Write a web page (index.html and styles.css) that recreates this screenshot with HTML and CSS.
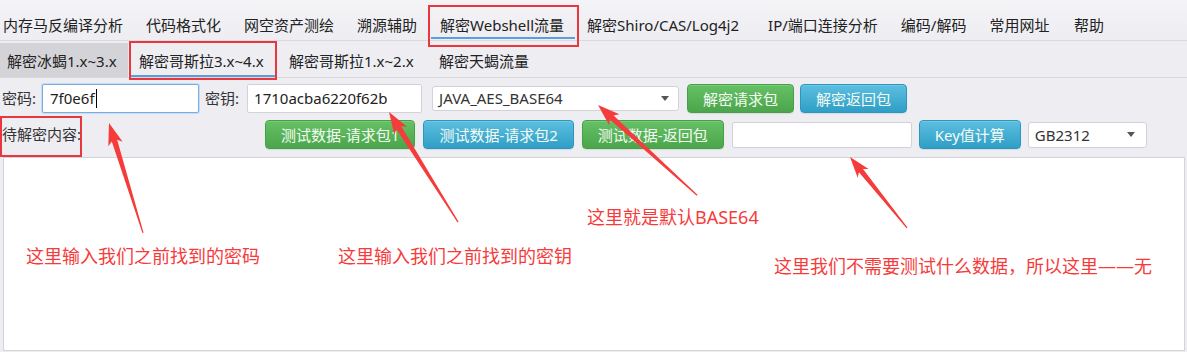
FILE: index.html
```html
<!DOCTYPE html>
<html lang="zh-CN">
<head>
<meta charset="utf-8">
<title>解密Webshell流量</title>
<link rel="stylesheet" href="styles.css">
</head>
<body>
<div class="app">
  <nav class="menubar">
    <div class="menu-item">内存马反编译分析</div>
    <div class="menu-item">代码格式化</div>
    <div class="menu-item">网空资产测绘</div>
    <div class="menu-item">溯源辅助</div>
    <div class="menu-item active">解密Webshell流量</div>
    <div class="menu-item menu-wide">解密Shiro/CAS/Log4j2</div>
    <div class="menu-item">IP/端口连接分析</div>
    <div class="menu-item">编码/解码</div>
    <div class="menu-item">常用网址</div>
    <div class="menu-item menu-last">帮助</div>
  </nav>
  <div class="tabbar">
    <div class="tab tab-first">解密冰蝎1.x~3.x</div>
    <div class="tab tab-fixed active">解密哥斯拉3.x~4.x</div>
    <div class="tab tab-fixed">解密哥斯拉1.x~2.x</div>
    <div class="tab">解密天蝎流量</div>
  </div>
  <div class="row row-1">
    <span class="lbl">密码:</span>
    <div class="field field-focus field-pwd"><span>7f0e6f</span><span class="caret"></span></div>
    <span class="lbl lbl-key">密钥:</span>
    <div class="field field-key">1710acba6220f62b</div>
    <div class="select select-mode"><span>JAVA_AES_BASE64</span><span class="select-arrow"></span></div>
    <div class="btn btn-green btn-dec-req">解密请求包</div>
    <div class="btn btn-blue btn-dec-resp">解密返回包</div>
  </div>
  <div class="row row-2">
    <div class="lbl-cell"><span class="lbl lbl-boxed">待解密内容:</span></div>
    <div class="btn btn-green">测试数据-请求包1</div>
    <div class="btn btn-blue btn-gap8">测试数据-请求包2</div>
    <div class="btn btn-green btn-gap8">测试数据-返回包</div>
    <div class="field field-test"></div>
    <div class="btn btn-blue btn-key">Key值计算</div>
    <div class="select select-enc"><span>GB2312</span><span class="select-arrow"></span></div>
  </div>
  <div class="editor"></div>

  <div class="note note-1">这里输入我们之前找到的密码</div>
  <div class="note note-2">这里输入我们之前找到的密钥</div>
  <div class="note note-3">这里就是默认BASE64</div>
  <div class="note note-4">这里我们不需要测试什么数据，所以这里——无</div>

  <svg class="arrows" width="1187" height="352" viewBox="0 0 1187 352">
    <g fill="#f63b3b">
      <polygon transform="translate(109 123) rotate(72.8)" points="0,0 22,-7.5 18.5,-2.8 115,-0.6 115,0.6 18.5,2.8 22,7.5"/>
      <polygon transform="translate(389 112) rotate(57.9)" points="0,0 22,-7.5 18.5,-2.8 130,-0.6 130,0.6 18.5,2.8 22,7.5"/>
      <polygon transform="translate(598 105) rotate(42.3)" points="0,0 22,-7.5 18.5,-2.8 134,-0.6 134,0.6 18.5,2.8 22,7.5"/>
      <polygon transform="translate(850 157) rotate(51.2)" points="0,0 21,-7 17.5,-2.6 91,-0.6 91,0.6 17.5,2.6 21,7"/>
    </g>
  </svg>
</div>
</body>
</html>
```
FILE: styles.css
```css
html, body {
  margin: 0;
  padding: 0;
}

body {
  background: #ededf2;
  font-family: "Noto Sans", "Noto Sans CJK SC", sans-serif;
  font-size: 15px;
  color: #222;
}

.app {
  position: relative;
  width: 1187px;
  height: 352px;
  overflow: hidden;
}

/* ---------- menu bar ---------- */
.menubar {
  display: flex;
  height: 40px;
  border-bottom: 1px solid #dadade;
  background: linear-gradient(#f4f4f7, #ededf2);
}

.menu-item {
  position: relative;
  padding: 10px 11.5px 0;
  line-height: 30px;
  white-space: nowrap;
}

.menu-item:first-child {
  padding-left: 3px;
}

.menu-wide {
  padding-right: 17.5px;
}

.menu-last {
  padding-left: 13px;
}

.menu-item.active::before {
  content: "";
  position: absolute;
  left: 2.5px;
  right: 0.5px;
  bottom: 1px;
  height: 2px;
  background: #5b9de0;
}

.menu-item.active::after {
  content: "";
  position: absolute;
  left: -0.5px;
  right: -3.5px;
  top: 5px;
  bottom: -7px;
  border: 2px solid #e8383d;
  z-index: 2;
}

/* ---------- tab bar ---------- */
.tabbar {
  display: flex;
  align-items: flex-end;
  height: 36px;
  border-bottom: 1px solid #d8d8dc;
}

.tab {
  position: relative;
  box-sizing: border-box;
  height: 34px;
  padding: 2px 11px 0;
  line-height: 32px;
  white-space: nowrap;
  flex: none;
}

.tab-first {
  width: 128px;
  padding-left: 7px;
  background: #d4d4d8;
}

.tab-fixed {
  width: 150px;
}

.tab.active::before {
  content: "";
  position: absolute;
  left: 3px;
  right: 2px;
  bottom: 0;
  height: 2px;
  background: #5b9de0;
}

.tab.active::after {
  content: "";
  position: absolute;
  left: 1px;
  right: 1px;
  top: -2px;
  bottom: -3px;
  border: 2px solid #e8383d;
  z-index: 2;
}

/* ---------- form rows ---------- */
.row {
  display: flex;
  align-items: center;
  padding-left: 2px;
}

.row-1 {
  margin-top: 5px;
  height: 30px;
}

.row-2 {
  margin-top: 7px;
  height: 29px;
}

.lbl {
  color: #333;
  white-space: nowrap;
  line-height: 29px;
}

.lbl-key {
  margin-left: 6px;
}

.lbl-cell {
  width: 263px;
  flex: none;
}

.lbl-boxed {
  position: relative;
  display: inline-block;
}

.lbl-boxed::after {
  content: "";
  position: absolute;
  left: -2px;
  right: -1px;
  top: -4px;
  bottom: -8px;
  border: 2px solid #e8383d;
}

.field {
  box-sizing: border-box;
  height: 29px;
  display: flex;
  align-items: center;
  padding: 0 6px;
  background: #fff;
  border: 1px solid #d2d2d8;
  border-radius: 2px;
  color: #222;
  white-space: nowrap;
  flex: none;
}

.field-focus {
  border-color: #7aaee2;
  box-shadow: 0 0 0 1px #c4dcf4;
}

.field-pwd {
  margin-left: 6px;
  width: 157px;
  padding-left: 7px;
}

.field-key {
  margin-left: 8px;
  width: 175px;
}

.field-test {
  margin-left: 8px;
  width: 180px;
  height: 26px;
}

.caret {
  width: 1px;
  height: 19px;
  background: #000;
  margin-left: 1px;
}

.select {
  box-sizing: border-box;
  display: flex;
  align-items: center;
  justify-content: space-between;
  padding: 0 9px 0 6px;
  background: #fff;
  border: 1px solid #d2d2d8;
  border-radius: 3px;
  color: #333;
  white-space: nowrap;
  flex: none;
}

.select-mode {
  margin-left: 10px;
  width: 247px;
  height: 25px;
}

.select-enc {
  margin-left: 7px;
  width: 119px;
  height: 26px;
  padding-right: 11px;
}

.select-arrow {
  width: 0;
  height: 0;
  border-left: 4px solid transparent;
  border-right: 4px solid transparent;
  border-top: 5px solid #555;
}

.btn {
  box-sizing: border-box;
  height: 29px;
  display: flex;
  align-items: center;
  padding: 0 15px;
  border-radius: 4px;
  color: #f4fbf4;
  white-space: nowrap;
  flex: none;
  box-shadow: inset 0 1px 0 rgba(255, 255, 255, 0.15), 0 1px 1px rgba(0, 0, 0, 0.08);
}

.btn-green {
  background: linear-gradient(#66c166, #4ba64b);
  border: 1px solid #46a046;
}

.btn-blue {
  background: linear-gradient(#5cbfe0, #2f9ec6);
  border: 1px solid #2b97bf;
}

.btn-dec-req {
  margin-left: 8px;
}

.btn-dec-resp {
  margin-left: 6px;
}

.btn-gap8 {
  margin-left: 8px;
}

.btn-key {
  margin-left: 7px;
}

/* ---------- editor ---------- */
.editor {
  box-sizing: border-box;
  margin: 8px 2px 0 3px;
  height: 194px;
  background: #fff;
  border: 1px solid #d3d3d8;
}

/* ---------- annotations ---------- */
.note {
  position: absolute;
  color: #f63b3b;
  font-size: 18px;
  line-height: 20px;
  white-space: nowrap;
}

.note-1 { left: 26px; top: 246px; }
.note-2 { left: 338px; top: 246px; }
.note-3 { left: 587px; top: 207px; }
.note-4 { left: 774px; top: 256px; }

.arrows {
  position: absolute;
  left: 0;
  top: 0;
  pointer-events: none;
}
```
